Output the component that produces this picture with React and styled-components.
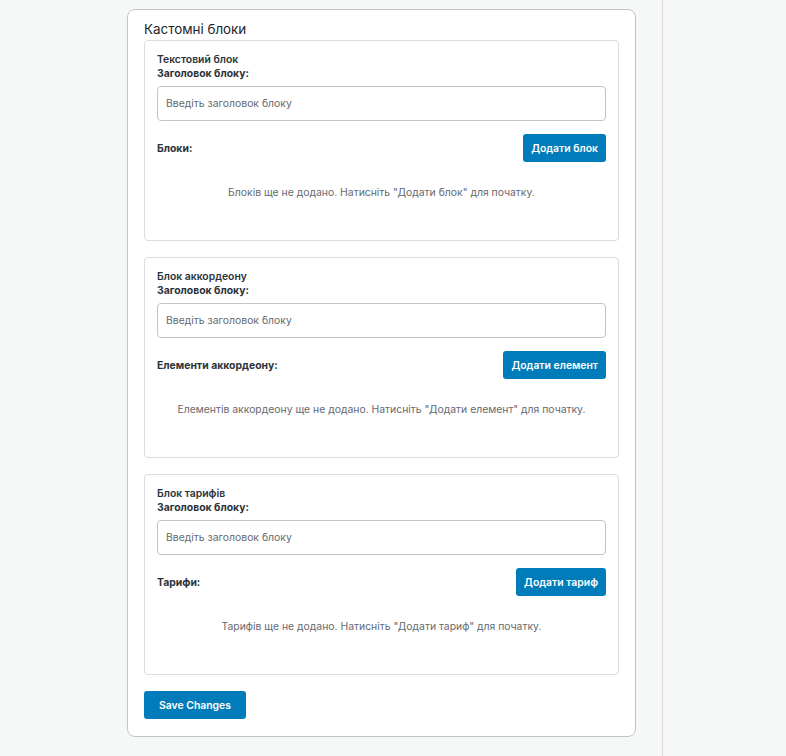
import React from "react";
import styled, { createGlobalStyle } from "styled-components";

const GlobalStyle = createGlobalStyle`
  body {
    margin: 0;
    background: #f6f7f7;
    font-family: Inter, "Noto Sans", sans-serif;
    color: #1d2327;
  }
`;

const Page = styled.div`
  display: flex;
  min-height: 756px;
`;

const Main = styled.div`
  width: 535px;
  padding: 9px 0 0 127px;
`;

const Sidebar = styled.div`
  flex: 1;
  border-left: 1px solid #dcdcde;
`;

const Panel = styled.div`
  width: 509px;
  box-sizing: border-box;
  background: #fff;
  border: 1px solid #c3c4c7;
  border-radius: 8px;
  padding: 10px 16px 17px;
  display: flex;
  flex-direction: column;
  gap: 16px;
`;

const PanelTitle = styled.h2`
  margin: 0 0 -14px;
  font-size: 13.4px;
  font-weight: 400;
  line-height: 18px;
  color: #1d2327;
`;

const Card = styled.section`
  border: 1px solid #dcdcde;
  border-radius: 4px;
  padding: 12px 12px 40px;
  display: flex;
  flex-direction: column;
`;

const CardTitle = styled.div`
  font-size: 10.4px;
  font-weight: 600;
  line-height: 14px;
  color: #2c3338;
`;

const Label = styled.label`
  font-size: 10.4px;
  font-weight: 700;
  line-height: 14px;
  color: #2c3338;
`;

const Input = styled.input`
  margin-top: 5px;
  height: 35px;
  box-sizing: border-box;
  border: 1px solid #c3c4c7;
  border-radius: 4px;
  padding: 0 8px;
  font-family: inherit;
  font-size: 10.4px;
  color: #1d2327;
  &::placeholder {
    color: #646970;
  }
`;

const Row = styled.div`
  display: flex;
  align-items: center;
  justify-content: space-between;
  margin-top: 13px;
`;

const RowLabel = styled.span`
  font-size: 10.4px;
  font-weight: 700;
  color: #2c3338;
`;

const Button = styled.button`
  height: 28px;
  padding: 0 ${(p) => (p.$wide ? "15px" : "8px")};
  border: 0;
  border-radius: 3px;
  background: #007cba;
  color: #fff;
  font-family: inherit;
  font-size: 10.4px;
  font-weight: 600;
  cursor: pointer;
`;

const Empty = styled.p`
  margin: 24px 0 0;
  text-align: center;
  font-size: 10.4px;
  line-height: 14px;
  color: #646970;
`;

const SaveButton = styled(Button)`
  align-self: flex-start;
`;

const blocks = [
  {
    title: "Текстовий блок",
    list: "Блоки:",
    action: "Додати блок",
    empty: 'Блоків ще не додано. Натисніть "Додати блок" для початку.',
  },
  {
    title: "Блок аккордеону",
    list: "Елементи аккордеону:",
    action: "Додати елемент",
    empty:
      'Елементів аккордеону ще не додано. Натисніть "Додати елемент" для початку.',
  },
  {
    title: "Блок тарифів",
    list: "Тарифи:",
    action: "Додати тариф",
    empty: 'Тарифів ще не додано. Натисніть "Додати тариф" для початку.',
  },
];

export default function App() {
  return (
    <Page>
      <GlobalStyle />
      <Main>
        <Panel>
          <PanelTitle>Кастомні блоки</PanelTitle>
          {blocks.map((b) => (
            <Card key={b.title}>
              <CardTitle>{b.title}</CardTitle>
              <Label>Заголовок блоку:</Label>
              <Input type="text" placeholder="Введіть заголовок блоку" />
              <Row>
                <RowLabel>{b.list}</RowLabel>
                <Button type="button">{b.action}</Button>
              </Row>
              <Empty>{b.empty}</Empty>
            </Card>
          ))}
          <SaveButton type="button" $wide>
            Save Changes
          </SaveButton>
        </Panel>
      </Main>
      <Sidebar />
    </Page>
  );
}
